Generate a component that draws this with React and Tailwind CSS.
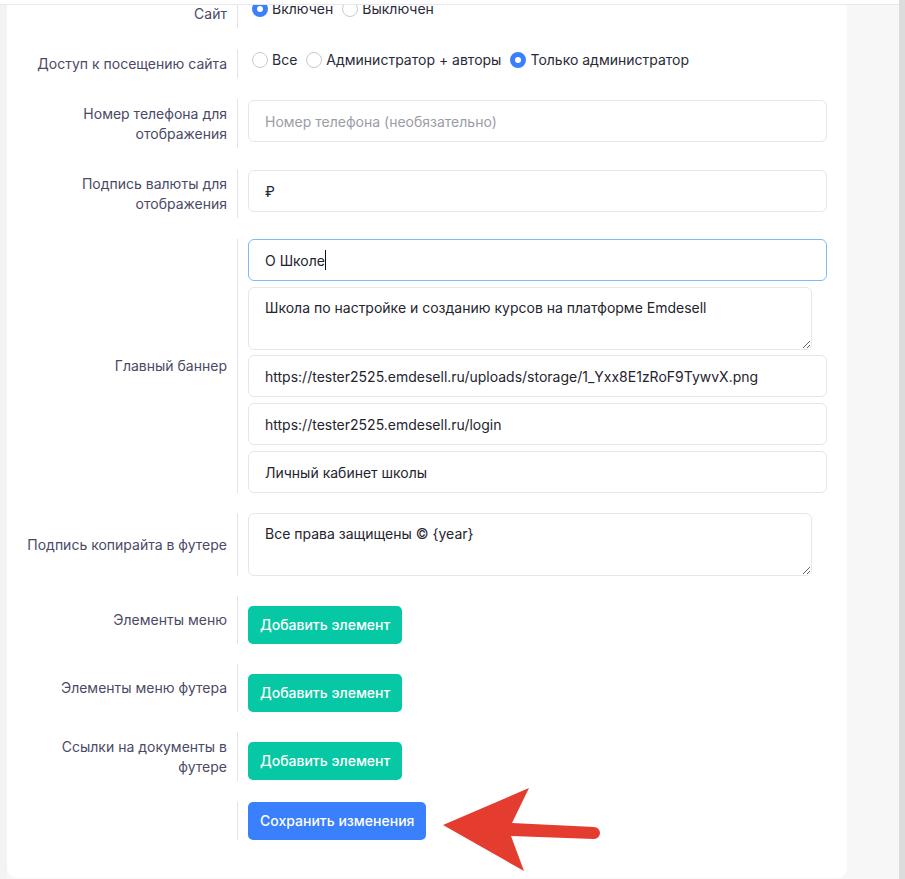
import React from "react";

const font = { fontFamily: "Inter, 'Noto Sans', sans-serif" };

function Label({ children }) {
  return (
    <div className="w-[231px] shrink-0 flex items-center justify-end text-right pr-[10px] py-[4.5px] border-r border-[#e3e3e8] text-[14px] leading-[20px] text-[#4a4a66] whitespace-nowrap">
      <div>{children}</div>
    </div>
  );
}

function Radio({ checked }) {
  return checked ? (
    <span className="inline-block w-[16px] h-[16px] rounded-full bg-[#3a80fc] border-[5px] border-[#3a80fc] relative">
      <span className="absolute inset-0 rounded-full bg-white" />
    </span>
  ) : (
    <span className="inline-block w-[16px] h-[16px] rounded-full bg-white border border-[#c9c9d1]" />
  );
}

function Option({ checked, children }) {
  return (
    <span className="inline-flex items-center">
      <span className="ml-[4px] mr-[4px] flex items-center">
        <Radio checked={checked} />
      </span>
      <span>{children}</span>
    </span>
  );
}

function Input({ value, placeholder, className = "" }) {
  return (
    <input
      readOnly
      defaultValue={value}
      placeholder={placeholder}
      className={
        "block w-full h-[42px] px-4 rounded-[6px] border border-[#e6e6ee] bg-white text-[14px] text-[#24242e] placeholder:text-[#9c9ca6] outline-none " +
        className
      }
      style={font}
    />
  );
}

function Textarea({ value, className = "" }) {
  return (
    <textarea
      readOnly
      defaultValue={value}
      className={
        "block w-[564px] h-[63px] px-4 pt-[10px] leading-[20px] rounded-[6px] border border-[#e6e6ee] bg-white text-[14px] text-[#24242e] outline-none " +
        className
      }
      style={font}
    />
  );
}

function AddButton() {
  return (
    <button className="mt-[10px] h-[38px] px-[12px] rounded-[5px] bg-[#06c8a4] text-white text-[14px] font-medium leading-[20px]" style={font}>
      Добавить элемент
    </button>
  );
}

export default function App() {
  return (
    <div className="relative h-[879px] w-[905px] overflow-hidden flex bg-[#f7f7f8]" style={font}>
      {/* header edge overlay */}
      <div className="absolute top-0 left-0 right-[6px] h-[5px] bg-white border-b border-[#e8e8ee] z-10" />

      <div className="w-[7px] shrink-0 bg-[#f3f3f6]" />

      <div className="w-[840px] shrink-0 h-[878px] bg-white rounded-b-[10px]">
        <div className="-mt-px">
          {/* Сайт */}
          <div className="flex mb-[21px]">
            <Label>Сайт</Label>
            <div className="pl-[10px] pt-[0px] text-[14px] leading-[20px] text-[#2a2a38] flex gap-[5px] items-start">
              <Option checked>Включен</Option>
              <Option>Выключен</Option>
            </div>
          </div>

          {/* Доступ */}
          <div className="flex mb-[21px]">
            <Label>Доступ к посещению сайта</Label>
            <div className="pl-[10px] pt-[1px] text-[14px] leading-[20px] text-[#2a2a38] flex gap-[5px] items-start">
              <Option>Все</Option>
              <Option>Администратор + авторы</Option>
              <Option checked>Только администратор</Option>
            </div>
          </div>

          {/* Телефон */}
          <div className="flex mb-[21px]">
            <Label>
              Номер телефона для
              <br />
              отображения
            </Label>
            <div className="flex-1 pl-[10px] pr-[20px] pt-[1px]">
              <Input placeholder="Номер телефона (необязательно)" />
            </div>
          </div>

          {/* Валюта */}
          <div className="flex mb-[21px]">
            <Label>
              Подпись валюты для
              <br />
              отображения
            </Label>
            <div className="flex-1 pl-[10px] pr-[20px] pt-[1px]">
              <Input value="₽" />
            </div>
          </div>

          {/* Баннер */}
          <div className="flex mb-[20px]">
            <Label>Главный баннер</Label>
            <div className="flex-1 pl-[10px] pr-[20px]">
              <div className="h-[42px] px-4 rounded-[6px] border border-[#80bbf3] bg-white text-[14px] text-[#24242e] flex items-center">
                <span>О Школе</span>
                <span className="inline-block w-px h-[20px] bg-[#111]" />
              </div>
              <Textarea className="mt-[6px]" value="Школа по настройке и созданию курсов на платформе Emdesell" />
              <Input className="mt-[5px]" value="https://tester2525.emdesell.ru/uploads/storage/1_Yxx8E1zRoF9TywvX.png" />
              <Input className="mt-[6px]" value="https://tester2525.emdesell.ru/login" />
              <Input className="mt-[6px]" value="Личный кабинет школы" />
            </div>
          </div>

          {/* Копирайт */}
          <div className="flex mb-[20px]">
            <Label>Подпись копирайта в футере</Label>
            <div className="flex-1 pl-[10px] pr-[20px]">
              <Textarea value="Все права защищены © {year}" />
            </div>
          </div>

          {/* Меню */}
          <div className="flex mb-[20px]">
            <Label>Элементы меню</Label>
            <div className="pl-[10px]">
              <AddButton />
            </div>
          </div>

          <div className="flex mb-[20px]">
            <Label>Элементы меню футера</Label>
            <div className="pl-[10px]">
              <AddButton />
            </div>
          </div>

          <div className="flex mb-[21px]">
            <Label>
              Ссылки на документы в
              <br />
              футере
            </Label>
            <div className="pl-[10px]">
              <AddButton />
            </div>
          </div>

          <div className="flex">
            <div className="w-[231px] shrink-0 border-r border-[#e3e3e8]" />
            <div className="pl-[10px]">
              <button className="h-[38px] px-[12px] rounded-[5px] bg-[#3a80fc] text-white text-[14px] font-medium leading-[20px]" style={font}>
                Сохранить изменения
              </button>
            </div>
          </div>
        </div>
      </div>

      <div className="flex-1 bg-[#f7f7f7]" />
      <div className="w-[6px] shrink-0 bg-[#dcdcdc]" />

      {/* annotation arrow */}
      <svg className="absolute left-[440px] top-[785px] z-20" width="165" height="90" viewBox="0 0 165 90">
        <path
          d="M3 40 L89 3 L72 38 L154 42 A6 6 0 0 1 154 54 L71 51 L84 86 Z"
          fill="#e43d30"
        />
      </svg>
    </div>
  );
}
